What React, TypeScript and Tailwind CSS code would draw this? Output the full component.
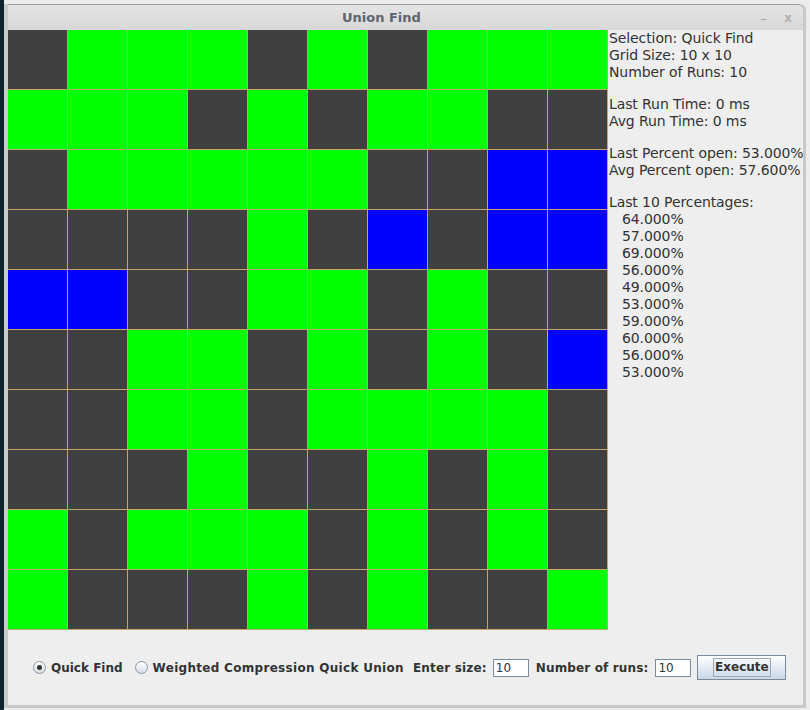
const D = 0
const G = 1
const B = 2

const grid: number[][] = [
  [D, G, G, G, D, G, D, G, G, G],
  [G, G, G, D, G, D, G, G, D, D],
  [D, G, G, G, G, G, D, D, B, B],
  [D, D, D, D, G, D, B, D, B, B],
  [B, B, D, D, G, G, D, G, D, D],
  [D, D, G, G, D, G, D, G, D, B],
  [D, D, G, G, D, G, G, G, G, D],
  [D, D, D, G, D, D, G, D, G, D],
  [G, D, G, G, G, D, G, D, G, D],
  [G, D, D, D, G, D, G, D, D, G],
]

const cellColor: Record<number, string> = {
  0: 'bg-[#404040]',
  1: 'bg-[#00ff00]',
  2: 'bg-[#0000ff]',
}

const percentages = ['64.000%', '57.000%', '69.000%', '56.000%', '49.000%', '53.000%', '59.000%', '60.000%', '56.000%', '53.000%']

function Radio({ checked }: { checked?: boolean }) {
  return (
    <span className="w-[13px] h-[13px] rounded-full border border-[#8896a4] bg-gradient-to-b from-white to-[#d6dee6] flex items-center justify-center">
      {checked && <span className="w-[5px] h-[5px] rounded-full bg-[#333]" />}
    </span>
  )
}

function Field({ value }: { value: string }) {
  return (
    <div className="w-[36px] h-[18px] bg-white border border-[#7a8a99] text-[12px] leading-[16px] pl-[2px] text-[#333] font-normal tracking-normal">
      {value}
    </div>
  )
}

export default function App() {
  return (
    <div className="w-[810px] h-[710px] bg-[#ececec] flex overflow-hidden" style={{ fontFamily: '"DejaVu Sans", sans-serif' }}>
      <div className="w-[4px] h-full bg-[#10222c]" />
      <div className="mt-[4px] w-[802px] h-[704px] flex flex-col border-l-[4px] border-r-[3px] border-b-[3px] border-[#c9c9c9] rounded-tr-[6px]">
        {/* title bar */}
        <div className="h-[26px] border-t border-[#9a9a9a] bg-gradient-to-b from-[#e4e4e4] to-[#d8d8d8] flex items-center relative rounded-tr-[5px]">
          <span className="ml-[334px] text-[13px] font-bold text-[#5f656c]">Union Find</span>
          <span className="absolute right-[36px] top-[3px] text-[14px] text-[#a8a8a8]">–</span>
          <span className="absolute right-[11px] top-[4px] text-[12px] font-bold text-[#b0b0b0]">x</span>
        </div>

        {/* content */}
        <div className="flex-1 bg-[#eeeeee] flex flex-col">
          <div className="flex">
            <div className="grid grid-cols-10 w-[600px] h-[600px] shrink-0">
              {grid.flatMap((row, r) =>
                row.map((c, i) => (
                  <div key={`${r}-${i}`} className={`${cellColor[c]} border-r border-b border-[#c6a468]`} />
                ))
              )}
            </div>
            <div className="pl-[1px] text-[14px] leading-[17px] text-[#333] tracking-[-0.1px] whitespace-nowrap">
              <div>Selection: Quick Find</div>
              <div>Grid Size: 10 x 10</div>
              <div>Number of Runs: 10</div>
              <div className="mt-[15px]">Last Run Time: 0 ms</div>
              <div>Avg Run Time: 0 ms</div>
              <div className="mt-[15px]">Last Percent open: 53.000%</div>
              <div>Avg Percent open: 57.600%</div>
              <div className="mt-[15px]">Last 10 Percentages:</div>
              {percentages.map((p, i) => (
                <div key={i} className="pl-[13px]">{p}</div>
              ))}
            </div>
          </div>

          {/* controls */}
          <div className="flex-1 flex items-center pl-[25px] text-[12px] font-bold text-[#333]">
            <Radio checked />
            <span className="ml-[5px]">Quick Find</span>
            <span className="ml-[12px]"><Radio /></span>
            <span className="ml-[5px] tracking-[0.3px]">Weighted Compression Quick Union</span>
            <span className="ml-[9px] tracking-[0.18px]">Enter size:</span>
            <span className="ml-[6px]"><Field value="10" /></span>
            <span className="ml-[7px] tracking-[0.14px]">Number of runs:</span>
            <span className="ml-[7px]"><Field value="10" /></span>
            <button className="ml-[6px] w-[89px] h-[25px] border border-[#7a8a9a] bg-gradient-to-b from-white to-[#c9d8e8] flex items-center justify-center">
              <span className="border border-[#9aa8b6] px-[1px] h-[19px] leading-[17px] text-[12px] font-bold text-[#333]">Execute</span>
            </button>
          </div>
        </div>
      </div>
    </div>
  )
}
